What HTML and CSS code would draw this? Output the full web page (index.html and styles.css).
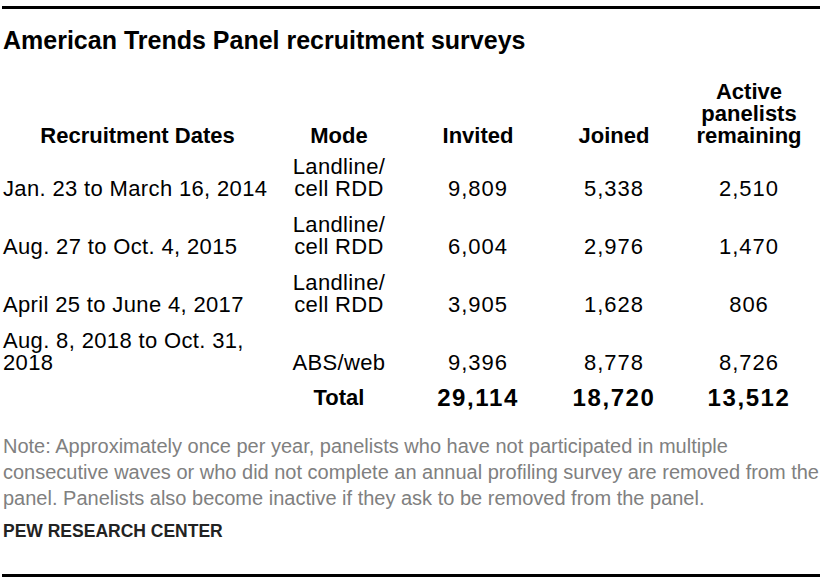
FILE: index.html
```html
<!DOCTYPE html>
<html lang="en">
<head>
<meta charset="utf-8">
<title>American Trends Panel recruitment surveys</title>
<link rel="stylesheet" href="styles.css">
</head>
<body>
<div class="chart">
  <h1 class="title">American Trends Panel recruitment surveys</h1>
  <div class="table">
    <div class="row head">
      <div class="c date">Recruitment Dates</div>
      <div class="c">Mode</div>
      <div class="c">Invited</div>
      <div class="c">Joined</div>
      <div class="c">Active<br>panelists<br>remaining</div>
    </div>
    <div class="row first">
      <div class="c date">Jan. 23 to March 16, 2014</div>
      <div class="c">Landline/<br>cell RDD</div>
      <div class="c num">9,809</div>
      <div class="c num">5,338</div>
      <div class="c num">2,510</div>
    </div>
    <div class="row">
      <div class="c date">Aug. 27 to Oct. 4, 2015</div>
      <div class="c">Landline/<br>cell RDD</div>
      <div class="c num">6,004</div>
      <div class="c num">2,976</div>
      <div class="c num">1,470</div>
    </div>
    <div class="row">
      <div class="c date">April 25 to June 4, 2017</div>
      <div class="c">Landline/<br>cell RDD</div>
      <div class="c num">3,905</div>
      <div class="c num">1,628</div>
      <div class="c num">806</div>
    </div>
    <div class="row">
      <div class="c date">Aug. 8, 2018 to Oct. 31,<br>2018</div>
      <div class="c">ABS/web</div>
      <div class="c num">9,396</div>
      <div class="c num">8,778</div>
      <div class="c num">8,726</div>
    </div>
    <div class="row total">
      <div class="c date"></div>
      <div class="c label">Total</div>
      <div class="c num">29,114</div>
      <div class="c num">18,720</div>
      <div class="c num">13,512</div>
    </div>
  </div>
  <p class="note">Note: Approximately once per year, panelists who have not participated in multiple<br>consecutive waves or who did not complete an annual profiling survey are removed from the<br>panel. Panelists also become inactive if they ask to be removed from the panel.</p>
  <p class="source">PEW RESEARCH CENTER</p>
</div>
</body>
</html>
```
FILE: styles.css
```css
html, body {
  margin: 0;
  padding: 0;
  background: #ffffff;
}

body {
  font-family: "Liberation Sans", Arial, sans-serif;
  color: #000;
}

.chart {
  margin: 6px 0 0 2px;
  width: 818px;
  border-top: 3px solid #000;
  border-bottom: 3px solid #000;
  padding: 0 0 32px 0;
  box-sizing: border-box;
}

.title {
  margin: 16px 0 0 1px;
  font-size: 25px;
  line-height: 30px;
  font-weight: 700;
  white-space: nowrap;
}

.table {
  margin-top: 26px;
}

.row {
  display: grid;
  grid-template-columns: 270px 134px 144px 128px 142px;
  align-items: end;
  font-size: 22px;
  line-height: 22px;
  letter-spacing: 0.35px;
  padding-top: 14px;
}

.row.head {
  padding-top: 0;
  font-weight: 700;
  letter-spacing: 0;
}

.row.first {
  padding-top: 9px;
}

.row.total {
  padding-top: 13px;
  font-weight: 700;
  letter-spacing: 0;
}

.c {
  text-align: center;
  white-space: nowrap;
}

.c.date {
  text-align: left;
  padding-left: 1px;
}

.head .c.date {
  text-align: center;
}

.num {
  letter-spacing: 1px;
}

.total .num {
  font-size: 24px;
  letter-spacing: 1.6px;
}

.note {
  margin: 24px 0 0 1px;
  font-size: 20px;
  line-height: 26px;
  color: #808080;
  white-space: nowrap;
}

.source {
  margin: 9px 0 0 1px;
  font-size: 17.5px;
  line-height: 22px;
  font-weight: 700;
  color: #222;
}
```
